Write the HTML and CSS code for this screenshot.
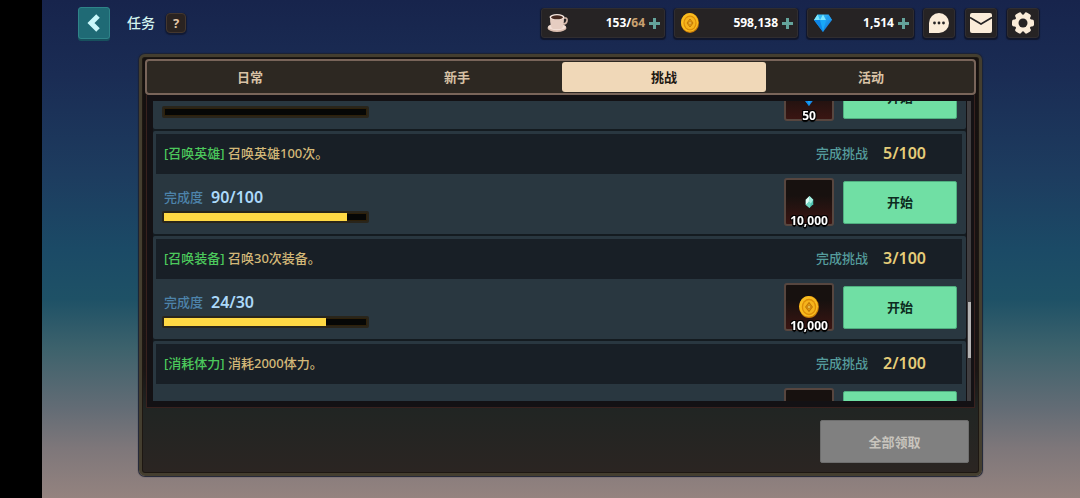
FILE: index.html
```html
<!DOCTYPE html>
<html lang="zh-CN">
<head>
  <meta charset="UTF-8" />
  <meta name="viewport" content="width=device-width, initial-scale=1.0"/>
  <title>任务</title>
  <link rel="stylesheet" href="styles.css">
</head>
<body>
  <!-- shared icons -->
  <svg class="sprite" aria-hidden="true">
    <linearGradient id="gem-fill" x1="0" y1="0" x2="1" y2="1">
      <stop offset="0" stop-color="#3fd2ff"/>
      <stop offset="1" stop-color="#0567d8"/>
    </linearGradient>
    <symbol id="icon-coin" viewBox="0 0 20 20">
      <ellipse cx="10" cy="10" rx="9" ry="10" fill="#c97a08"/>
      <ellipse cx="9.6" cy="9.4" rx="8.6" ry="9.4" fill="#f9bd20"/>
      <ellipse cx="10" cy="10" rx="6.6" ry="7.4" fill="#dd8d08"/>
      <ellipse cx="10" cy="10" rx="5.4" ry="6.2" fill="#f6b41c"/>
      <path d="M10 6 13 10 10 14 7 10z" fill="#e9a012" stroke="#c07708" stroke-width="1"/>
      <circle cx="10" cy="10" r="1.3" fill="#ffe06a" stroke="#b87005" stroke-width=".7"/>
    </symbol>
    <symbol id="icon-gem" viewBox="0 0 20 20">
      <path d="M4.5 1.5h11L19 7l-9 12L1 7z" fill="url(#gem-fill)"/>
      <path d="M4.5 1.5 7 7H1zM7 7l3-5.500L13 7z" fill="#7be6ff"/>
      <path d="M15.5 1.5 13 7h6z" fill="#1e9df0"/>
      <path d="M7 7h6l-3 12z" fill="#18a8f8"/>
      <path d="M1 7h6l3 12z" fill="#0d86e8"/>
    </symbol>
    <symbol id="icon-shard" viewBox="0 0 12 18">
      <path d="M6 1 11 6v6l-5 5-5-5V6z" fill="#4cc0ae"/>
      <path d="M6 1 1 6v7l4-4z" fill="#e4fff8"/>
      <path d="M6 1 11 6l-3 5-3-2z" fill="#a4eee0"/>
      <path d="M5 9l3 2-2 6-5-4z" fill="#75d8c5"/>
    </symbol>
  </svg>

  <header class="topbar">
    <button class="back-btn" aria-label="返回">
      <svg width="16" height="18" viewBox="0 0 16 18"><path d="M12 2 5 9l7 7" fill="none" stroke="#c9f7fa" stroke-width="5"/></svg>
    </button>
    <h1>任务</h1>
    <button class="help-btn">?</button>

    <div class="resources">
      <button class="resource">
        <svg width="22" height="20" viewBox="0 0 22 20">
          <ellipse cx="10" cy="15" rx="9.5" ry="4" fill="#d9bcae"/>
          <ellipse cx="10" cy="14" rx="9" ry="3.300" fill="#f3dfd5"/>
          <path d="M16 5h2.500q2 0 1.500 3t-4 3" fill="none" stroke="#d9bcae" stroke-width="1.600"/>
          <path d="M3 4q0 11 3 12h8q3-1 3-12z" fill="#e6cdc1"/>
          <ellipse cx="10" cy="4" rx="7.500" ry="3" fill="#f5e6de"/>
          <ellipse cx="10" cy="4.300" rx="6" ry="2" fill="#46291f"/>
        </svg>
        <span class="amount">153/<em>64</em></span>
        <svg class="plus" width="11" height="11" viewBox="0 0 11 11"><path d="M5.500 0v11M0 5.500h11"/></svg>
      </button>
      <button class="resource">
        <svg width="20" height="20"><use href="#icon-coin"/></svg>
        <span class="amount">598,138</span>
        <svg class="plus" width="11" height="11" viewBox="0 0 11 11"><path d="M5.500 0v11M0 5.500h11"/></svg>
      </button>
      <button class="resource short">
        <svg width="20" height="20"><use href="#icon-gem"/></svg>
        <span class="amount">1,514</span>
        <svg class="plus" width="11" height="11" viewBox="0 0 11 11"><path d="M5.500 0v11M0 5.500h11"/></svg>
      </button>
    </div>

    <div class="tools">
      <button class="tool-btn" aria-label="聊天">
        <svg width="22" height="22" viewBox="0 0 22 22">
          <path d="M1 21V11A10 10 0 1 1 11 21z" fill="#fbecd9"/>
          <circle cx="6.500" cy="11" r="1.400" fill="#262324"/><circle cx="11" cy="11" r="1.400" fill="#262324"/><circle cx="15.500" cy="11" r="1.400" fill="#262324"/>
        </svg>
      </button>
      <button class="tool-btn" aria-label="邮件">
        <svg width="22" height="20" viewBox="0 0 22 20">
          <rect width="22" height="20" rx="2" fill="#fbecd9"/>
          <path d="M0 4.500 11 11 22 4.500" fill="none" stroke="#262324" stroke-width="1.600"/>
        </svg>
      </button>
      <button class="tool-btn" aria-label="设置">
        <svg width="22" height="22" viewBox="0 0 22 22">
          <g fill="#fbecd9">
            <circle cx="11" cy="11" r="8.600"/>
            <rect x="7.500" y="0" width="7" height="22" rx="2" transform="rotate(30 11 11)"/>
            <rect x="7.500" y="0" width="7" height="22" rx="2" transform="rotate(90 11 11)"/>
            <rect x="7.500" y="0" width="7" height="22" rx="2" transform="rotate(150 11 11)"/>
          </g>
          <circle cx="11" cy="11" r="4.500" fill="#262324"/>
        </svg>
      </button>
    </div>
  </header>

  <main class="panel">
    <nav class="tabs">
      <button class="tab">日常</button>
      <button class="tab">新手</button>
      <button class="tab active">挑战</button>
      <button class="tab">活动</button>
    </nav>

    <div class="list-frame">
      <div class="quest-list" id="quest-list">
        <section class="quest">
          <div class="quest-head"></div>
          <div class="quest-body">
            <div class="progress">
              <p class="progress-text"></p>
              <div class="bar"><div class="fill" style="width: 0%"></div></div>
            </div>
            <div class="reward"><svg width="20" height="20"><use href="#icon-gem"/></svg><span>50</span></div>
            <button class="start-btn">开始</button>
          </div>
        </section>

        <section class="quest">
          <div class="quest-head">
            <h2><b>[召唤英雄]</b> 召唤英雄100次。</h2>
            <p class="times">完成挑战 <span>5/100</span></p>
          </div>
          <div class="quest-body">
            <div class="progress">
              <p class="progress-text">完成度 <span>90/100</span></p>
              <div class="bar"><div class="fill" style="width: 90%"></div></div>
            </div>
            <div class="reward"><svg width="9" height="14"><use href="#icon-shard"/></svg><span>10,000</span></div>
            <button class="start-btn">开始</button>
          </div>
        </section>

        <section class="quest">
          <div class="quest-head">
            <h2><b>[召唤装备]</b> 召唤30次装备。</h2>
            <p class="times">完成挑战 <span>3/100</span></p>
          </div>
          <div class="quest-body">
            <div class="progress">
              <p class="progress-text">完成度 <span>24/30</span></p>
              <div class="bar"><div class="fill" style="width: 80%"></div></div>
            </div>
            <div class="reward"><svg width="22" height="22"><use href="#icon-coin"/></svg><span>10,000</span></div>
            <button class="start-btn">开始</button>
          </div>
        </section>

        <section class="quest">
          <div class="quest-head">
            <h2><b>[消耗体力]</b> 消耗2000体力。</h2>
            <p class="times">完成挑战 <span>2/100</span></p>
          </div>
          <div class="quest-body">
            <div class="progress">
              <p class="progress-text"></p>
              <div class="bar"><div class="fill" style="width: 0%"></div></div>
            </div>
            <div class="reward"></div>
            <button class="start-btn">开始</button>
          </div>
        </section>
      </div>
      <div class="scrollbar"><div class="thumb"></div></div>
    </div>

    <footer class="panel-footer">
      <button class="claim-btn" disabled>全部领取</button>
    </footer>
  </main>

  <script>
    // open the list with the first quest mostly scrolled past
    document.getElementById('quest-list').scrollTop = 75;
  </script>
</body>
</html>
```

FILE: styles.css
```css
:root {
  --dark: #262324;
  --cream: #fbecd9;
  --green: #70dfa4;
  --slate: #293740;
  --slate-dark: #181f26;
}

* {
  box-sizing: border-box;
}

body {
  display: flex;
  flex-direction: column;
  height: 100vh;
  min-height: 400px;
  margin: 0;
  padding-bottom: 22px;
  border-left: 42px solid #000;
  background: linear-gradient(#17244c 0%, #1a2c54 15%, #1d3c5f 35%, #1b4a66 50%, #1e5166 60%, #3d626c 70%, #636c75 82%, #7e777a 90%, #94837f 100%);
  font-family: "Noto Sans", "Noto Sans CJK SC", sans-serif;
  font-size: 13px;
  line-height: 20px;
}

h1, h2, p {
  margin: 0;
  font-weight: 500;
}

button {
  padding: 0;
  border: none;
  font: inherit;
  cursor: pointer;
}

.sprite {
  position: absolute;
  width: 0;
  height: 0;
}

/* top bar */
.topbar {
  display: flex;
  align-items: center;
  padding: 7px 41px 0 36px;
}

.topbar h1 {
  margin: 0 11px 0 17px;
  color: #d3f3ef;
  font-size: 14px;
}

.back-btn {
  display: flex;
  align-items: center;
  justify-content: center;
  width: 32px;
  height: 32px;
  border: 1px solid #2f8489;
  border-radius: 3px;
  background: #1f6a75;
  box-shadow: 0 2px 0 #17505d;
}

.help-btn {
  width: 20px;
  height: 20px;
  border: 1px solid #44372f;
  border-radius: 4px;
  background: #2a2321;
  box-shadow: 0 1px 1px 1px #111a34;
  color: #e3c7a8;
  font-weight: 700;
  line-height: 18px;
}

.resources {
  display: flex;
  gap: 9px;
  margin-left: auto;
}

.resource, .tool-btn {
  display: flex;
  align-items: center;
  height: 30px;
  border: 1px solid #302d30;
  border-radius: 3px;
  background: var(--dark);
  box-shadow: 0 1px 1px 1px #10162b;
}

.resource {
  width: 124px;
  padding: 0 4px 0 5px;
}

.resource.short {
  width: 107px;
}

.amount {
  margin: 0 4px 0 auto;
  color: #fff;
  font-size: 12px;
  font-weight: 700;
}

.amount em {
  color: #c9a070;
  font-style: normal;
}

.plus {
  fill: none;
  stroke: #64a39b;
  stroke-width: 3;
}

.tools {
  display: flex;
  gap: 10px;
  margin-left: 9px;
}

.tool-btn {
  justify-content: center;
  width: 32px;
}

/* quest panel */
.panel {
  display: flex;
  flex: 1;
  flex-direction: column;
  min-height: 0;
  margin: 15px 98px 0 97px;
  border: 3px solid #443e2f;
  border-radius: 6px;
  background: linear-gradient(#14100f 0%, #1a1514 75%, #212523 85%, #2b2522 100%);
  box-shadow: inset 0 0 0 1px #1d1712, 0 0 1px 1px #1c2233;
}

.tabs {
  display: grid;
  grid-template-columns: repeat(4, 1fr);
  gap: 3px;
  margin: 2px 3px 0;
  padding: 1px;
  border: 2px solid #79655a;
  border-radius: 4px;
  background: #2d2822;
}

.tab {
  height: 30px;
  border-radius: 3px;
  background: none;
  color: #d8c2a6;
  font-weight: 700;
}

.tab.active {
  background: #f0d8b8;
  color: #1d1712;
}

.list-frame {
  display: flex;
  flex: 1;
  gap: 1px;
  min-height: 0;
  margin: 0 4px;
  padding: 6px 3px 6px 6px;
  border: 1px solid #38211e;
  border-top: none;
  background: #131114;
}

.quest-list {
  flex: 1;
  overflow-y: auto;
  scrollbar-width: none;
  background: #141b20;
}

.quest {
  margin-bottom: 2px;
  padding: 3px 4px 0 3px;
  border-radius: 2px;
  background: var(--slate);
}

.quest-head {
  display: flex;
  align-items: center;
  justify-content: space-between;
  height: 40px;
  padding: 0 36px 3px 8px;
  background: var(--slate-dark);
}

.quest-head h2 {
  color: #d3b878;
  font-size: 13px;
}

.quest-head b {
  color: #4cc95c;
  font-weight: 500;
}

.times {
  display: flex;
  gap: 15px;
  color: #559c9c;
}

.times span, .progress-text span {
  font-size: 16px;
  font-weight: 600;
}

.times span {
  color: #e5cd79;
}

.quest-body {
  display: flex;
  align-items: center;
  height: 60px;
  padding: 0 5px 4px 6px;
}

.progress {
  width: 207px;
  margin-right: auto;
  padding-top: 6px;
}

.progress-text {
  display: flex;
  gap: 8px;
  height: 24px;
  padding-left: 2px;
  color: #4d83aa;
}

.progress-text span {
  color: #acd9fa;
}

.bar {
  height: 12px;
  border: 2px solid #29251b;
  border-radius: 2px;
  background: #060706;
  box-shadow: inset 0 0 0 1px #2e210b;
}

.fill {
  height: 100%;
  background: #ffd944;
}

.reward {
  position: relative;
  display: flex;
  align-items: center;
  justify-content: center;
  width: 50px;
  height: 48px;
  margin-right: 9px;
  border: 2px solid #57463f;
  border-radius: 3px;
  background: linear-gradient(#17110f 35%, #3a1512);
}

/* amount sits over the bottom edge of the slot */
.reward span {
  position: absolute;
  bottom: -5px;
  color: #fff;
  font-size: 12px;
  font-weight: 700;
  line-height: 16px;
  text-shadow: 1px 1px 0 #000, -1px 1px 0 #000, 1px -1px 0 #000, -1px -1px 0 #000, 0 2px 1px #000;
}

.start-btn {
  width: 114px;
  height: 43px;
  border: 1px solid #4fae7f;
  border-radius: 2px;
  background: var(--green);
  color: #0d2b20;
  font-weight: 700;
}

.scrollbar {
  display: flex;
  flex-direction: column;
  width: 4px;
  padding: 201px 0 0 1px;
  background: #403e40;
}

.thumb {
  height: 56px;
  background: #b5b3b3;
}

.panel-footer {
  display: flex;
  justify-content: flex-end;
  padding: 12px 10px 10px;
}

.claim-btn {
  width: 149px;
  height: 43px;
  border: 1px solid #6e6e6e;
  border-radius: 2px;
  background: #808080;
  color: #c8c4bd;
  font-weight: 700;
}
```
